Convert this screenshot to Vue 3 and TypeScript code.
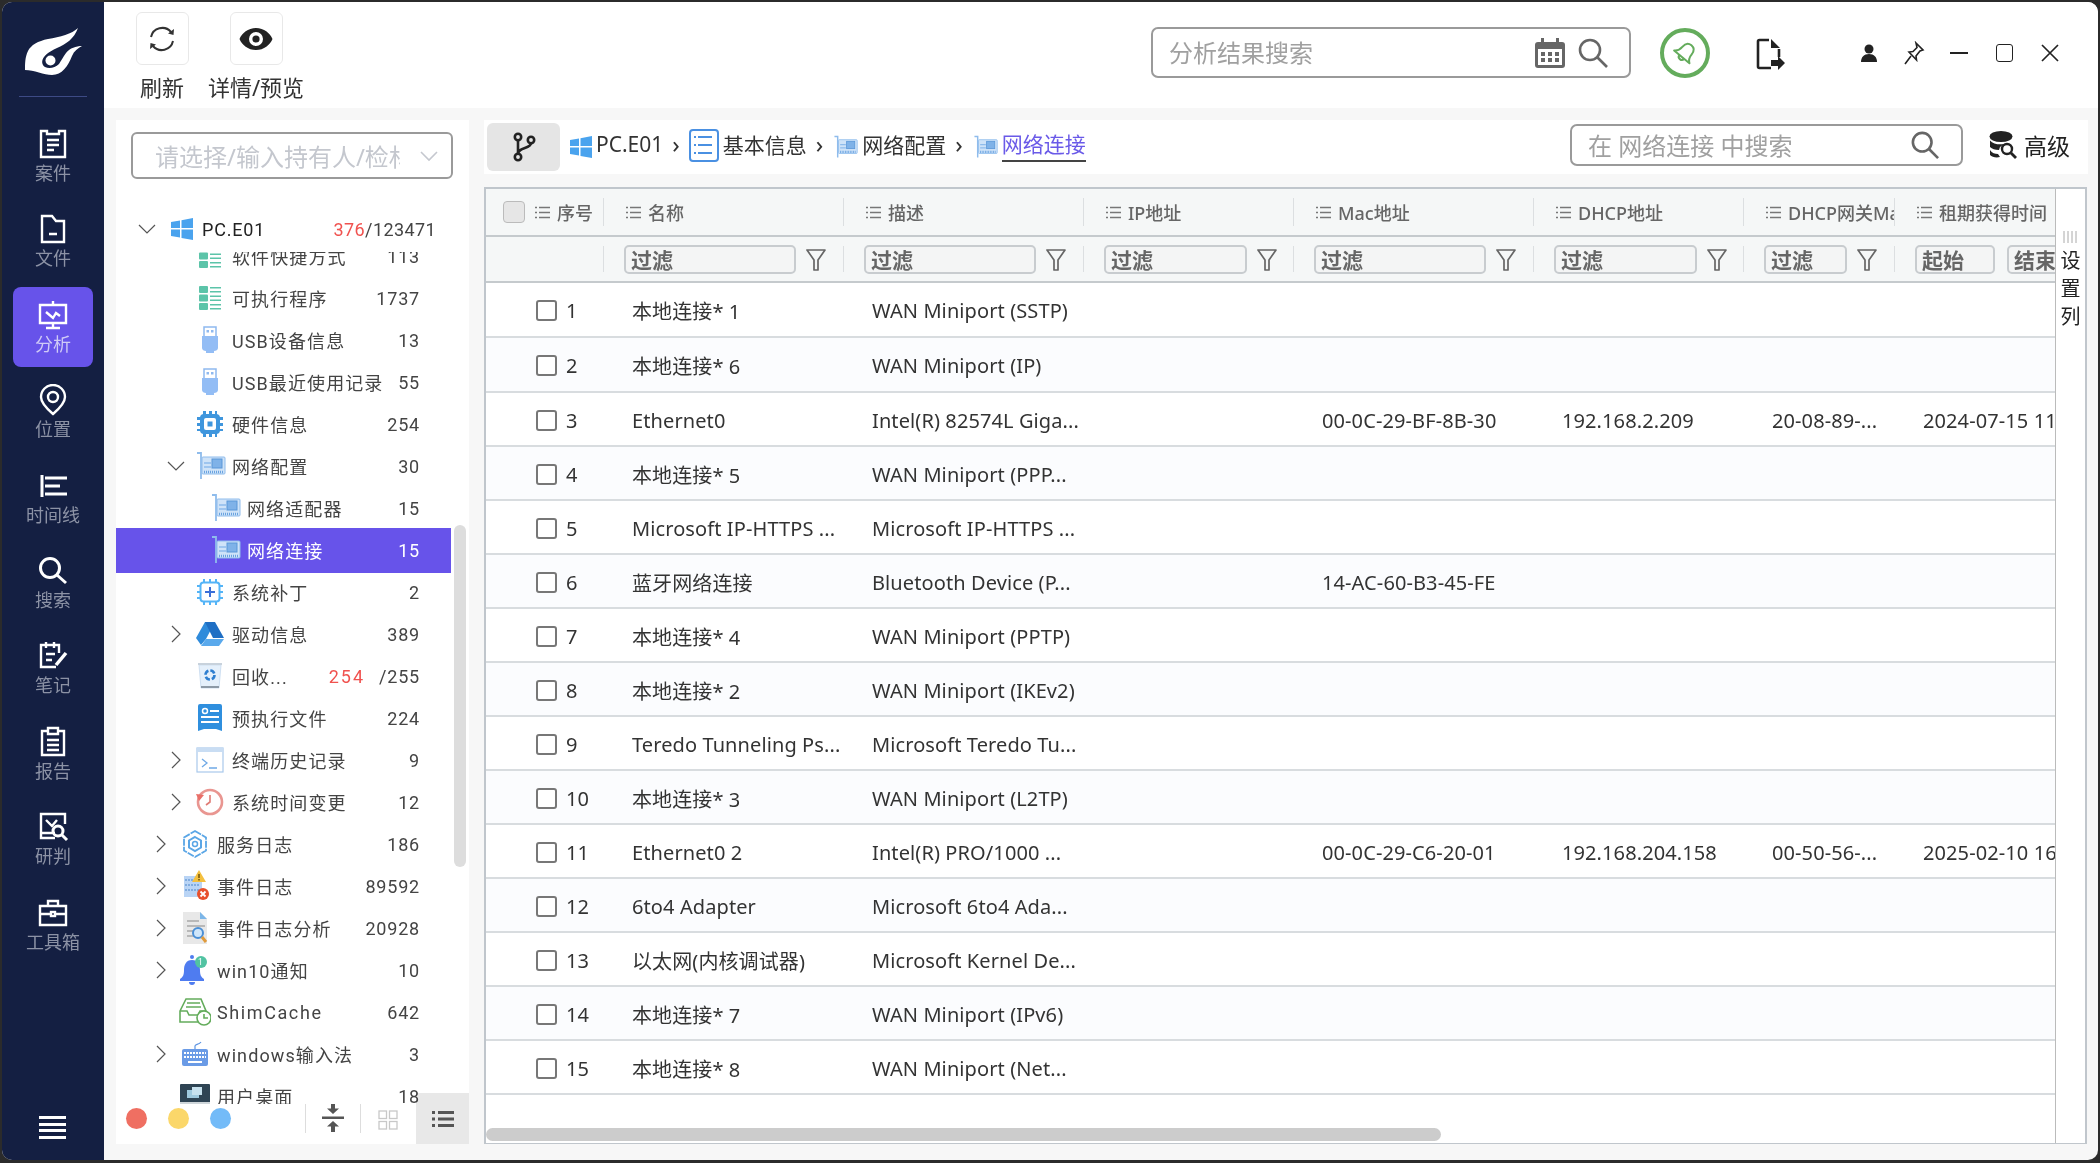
<template>
  <div class="win">
    <aside class="side">
      <div class="logo">
        <svg width="60" height="54" viewBox="0 0 60 54">
          <path fill="#fff" d="M54 0C48 6 36 9 24 11 14 13 7 17 4 23 1 29 1 36 1 42 10 42 20 47 28 47 38 47 44 38 48 28 50 23 54 20 58 18 52 18 46 20 42 25 39 29 37 33 35 36 31 40 25 41 21 39 18 37 17 33 20 29 24 24 29 22 33 20 42 16 50 11 54 0Z" />
          <circle cx="26.500" cy="32.500" r="5" fill="#fff" />
        </svg>
      </div>
      <nav class="nav">
        <div v-for="n in navItems" :key="n.label" class="nav-item" :class="{ on: n.label === '分析' }">
          <svg width="32" height="32" viewBox="0 0 32 32" fill="none" stroke="#fff" stroke-width="2.4" v-html="n.icon" />
          <span>{{ n.label }}</span>
        </div>
      </nav>
      <div class="burger"><i /><i /><i /><i /></div>
    </aside>

    <div class="content">
      <header class="topbar">
        <div class="tool">
          <div class="tool-btn">
            <svg width="30" height="30" viewBox="0 0 30 30" fill="none" stroke="#333" stroke-width="2">
              <path d="M4 13A11.500 11.500 0 0 1 24 8M26 17A11.500 11.500 0 0 1 6 22" />
              <path fill="#333" stroke="none" d="M21 9.500l5.500 1.500 .5-6zM9 20.500L3.500 19 3 25z" />
            </svg>
          </div>
          <span>刷新</span>
        </div>
        <div class="tool tool2">
          <div class="tool-btn">
            <svg width="34" height="24" viewBox="0 0 34 24">
              <path fill="#222" fill-rule="evenodd" d="M17 1C9 1 3 6 .5 12 3 18 9 23 17 23s14-5 16.500-11C31 6 25 1 17 1ZM17 5a7 7 0 1 1 0 14 7 7 0 0 1 0-14Z" />
              <circle cx="17" cy="12" r="3.600" fill="#222" />
            </svg>
          </div>
          <span>详情/预览</span>
        </div>
        <div class="top-right">
          <label class="search top-search">
            <input placeholder="分析结果搜索" />
            <svg width="32" height="30" viewBox="0 0 32 30" class="cal">
              <rect x="1" y="4" width="30" height="26" rx="3" fill="#666" />
              <rect x="4" y="11" width="24" height="16" fill="#fff" />
              <rect x="7" y="0" width="3" height="7" fill="#666" /><rect x="22" y="0" width="3" height="7" fill="#666" />
              <g fill="#666"><rect x="7" y="14" width="4" height="4" /><rect x="14" y="14" width="4" height="4" /><rect x="21" y="14" width="4" height="4" /><rect x="7" y="20" width="4" height="4" /><rect x="14" y="20" width="4" height="4" /><rect x="21" y="20" width="4" height="4" /></g>
            </svg>
            <svg width="30" height="30" viewBox="0 0 30 30" fill="none" stroke="#666" stroke-width="2.600"><circle cx="12" cy="12" r="10" /><path d="M19 19l10 10" /></svg>
          </label>
          <div class="bell-ring">
            <svg width="28" height="28" viewBox="0 0 28 28" fill="none" stroke="#64ac5c" stroke-width="2" stroke-linejoin="round">
              <g transform="rotate(40 14 14)"><path d="M14 4c-4 0-6 3-6 7 0 4-1 6-4 8h20c-3-2-4-4-4-8 0-4-2-7-6-7zM11 19c0 4 6 4 6 0" /></g>
            </svg>
          </div>
          <svg class="export" width="30" height="32" viewBox="0 0 30 32" fill="none" stroke="#222" stroke-width="2.600">
            <path d="M13 2H3.500A1.500 1.500 0 0 0 2 3.500v25A1.500 1.500 0 0 0 3.500 30H15M23 11v8" />
            <path fill="#222" stroke="none" d="M15 1l9 9h-9zM15 22h7v-4l7 7-7 7v-4h-7z" />
          </svg>
          <div class="win-btns">
            <svg width="18" height="18" viewBox="0 0 18 18"><circle cx="9" cy="5" r="4.500" fill="#222" /><path fill="#222" d="M1 18c0-5 3-8 8-8s8 3 8 8z" /></svg>
            <svg width="22" height="24" viewBox="0 0 22 24" fill="none" stroke="#222" stroke-width="1.600"><path d="M13 2l7 7-3 1-4 5 .5 4L6 11l4-.5 4-4zM8 15l-6 8" /></svg>
            <i class="w-min" />
            <i class="w-max" />
            <svg width="18" height="18" viewBox="0 0 18 18" stroke="#222" stroke-width="1.700"><path d="M1 1l16 16M17 1L1 17" /></svg>
          </div>
        </div>
      </header>

      <div class="body">
        <section class="tree">
          <div class="select"><span>请选择/输入持有人/检材</span>
            <svg width="20" height="12" viewBox="0 0 20 12" fill="none" stroke="#c5c8cf" stroke-width="1.600"><path d="M2 2l8 8 8-8" /></svg>
          </div>
          <div class="root">
            <svg class="chev" width="20" height="12" viewBox="0 0 20 12" fill="none" stroke="#555" stroke-width="1.200"><path d="M2 2l8 8 8-8" /></svg>
            <svg class="ico" width="24" height="24" viewBox="0 0 24 24" v-html="icons.win" />
            <span class="root-name">PC.E01</span>
            <span class="root-cnt"><em>376</em>/123471</span>
          </div>
          <div class="tree-clip">
            <div class="tree-scroll">
              <div v-for="t in treeRows" :key="t.name" class="row" :class="[`lv${t.lv}`, { sel: t.name === '网络连接', wide: t.name === 'ShimCache' }]">
                <span class="chev-box">
                  <svg v-if="t.ch === 'r'" width="12" height="20" viewBox="0 0 12 20" fill="none" stroke="#555" stroke-width="1.200"><path d="M2 2l8 8-8 8" /></svg>
                  <svg v-if="t.ch === 'd'" width="20" height="12" viewBox="0 0 20 12" fill="none" stroke="#555" stroke-width="1.200"><path d="M2 2l8 8 8-8" /></svg>
                </span>
                <svg class="ico" width="32" height="32" viewBox="0 0 32 32" v-html="icons[t.icon]" />
                <span class="name">{{ t.name }}</span>
                <span class="cnt"><em v-if="t.red">{{ t.red }}</em>{{ t.cnt }}</span>
              </div>
            </div>
          </div>
          <div class="vbar" />
          <div class="tree-foot">
            <i class="dot" style="background:#ef6f62" /><i class="dot" style="background:#fbd76a" /><i class="dot" style="background:#73bbf8" />
            <i class="foot-sep s1" />
            <svg class="f-col" width="22" height="28" viewBox="0 0 22 28" fill="#555"><rect x="0" y="12.500" width="22" height="2.500" /><path d="M11 10 5 4.500h4V0h4v4.500h4zM11 17l6 5.500h-4V28H9v-5.500H5z" /></svg>
            <i class="foot-sep s2" />
            <svg class="f-grid" width="20" height="20" viewBox="0 0 20 20" fill="none" stroke="#c8c8c8" stroke-width="1.300"><rect x="1" y="1" width="7.500" height="7.500" /><rect x="11.500" y="1" width="7.500" height="7.500" /><rect x="1" y="11.500" width="7.500" height="7.500" /><rect x="11.500" y="11.500" width="7.500" height="7.500" /></svg>
            <div class="f-list">
              <svg width="22" height="16" viewBox="0 0 22 16" fill="#555"><rect y="0" width="3" height="3" /><rect x="6" y="0" width="16" height="3" /><rect y="6.500" width="3" height="3" /><rect x="6" y="6.500" width="16" height="3" /><rect y="13" width="3" height="3" /><rect x="6" y="13" width="16" height="3" /></svg>
            </div>
          </div>
        </section>

        <main class="main">
          <div class="crumbs">
            <div class="branch">
              <svg width="26" height="30" viewBox="0 0 26 30" fill="none" stroke="#222" stroke-width="2.600"><circle cx="7" cy="5" r="3.200" /><circle cx="7" cy="25" r="3.200" /><circle cx="20" cy="8" r="3.200" /><path d="M7 8v14M20 11c0 6-13 4-13 11" /></svg>
            </div>
            <svg class="c-win" width="24" height="24" viewBox="0 0 24 24" v-html="icons.win" />
            <span class="c-txt">PC.E01</span><b class="sep">›</b>
            <svg class="c-list" width="30" height="33" viewBox="0 0 30 33" fill="none" stroke="#4a90e2"><rect x="1" y="1" width="28" height="31" rx="3" stroke-width="2" /><path stroke-width="1.800" d="M9 8h14M9 16h14M9 24h14M5 8h2M5 16h2M5 24h2" /></svg>
            <span class="c-txt">基本信息</span><b class="sep">›</b>
            <svg class="c-nic" width="26" height="28" viewBox="0 0 32 32" v-html="icons.nic" />
            <span class="c-txt">网络配置</span><b class="sep">›</b>
            <svg class="c-nic" width="26" height="28" viewBox="0 0 32 32" v-html="icons.nic" />
            <span class="c-txt cur">网络连接</span>
            <div class="c-right">
              <label class="search sub-search">
                <input placeholder="在 网络连接 中搜索" />
                <svg width="28" height="28" viewBox="0 0 30 30" fill="none" stroke="#666" stroke-width="2.800"><circle cx="12" cy="12" r="10" /><path d="M19 19l10 10" /></svg>
              </label>
              <svg class="adv-ico" width="28" height="28" viewBox="0 0 28 28">
                <ellipse cx="12" cy="5.500" rx="11.500" ry="5.500" fill="#222" />
                <path fill="#222" d="M1 9.500c3 3.500 9 4.500 14 3.500l-4 3-1 3c-4 0-7-1-9-3zM1 19c2 3 5 4 8 4l2 3c-4 1-8 0-10-2z" />
                <circle cx="18" cy="18" r="5" fill="#fff" stroke="#222" stroke-width="2.400" />
                <path stroke="#222" stroke-width="2.800" d="M22 22l5 5" />
              </svg>
              <span class="adv">高级</span>
            </div>
          </div>

          <div class="tbl">
            <div class="tbl-inner">
              <div class="t-grid t-head">
                <div class="h c-seq"><i class="h-check" /><svg class="lst" width="15" height="13" viewBox="0 0 15 13" v-html="lstIcon" /><span>序号</span></div>
                <div v-for="c in columns" :key="c" class="h"><svg class="lst" width="15" height="13" viewBox="0 0 15 13" v-html="lstIcon" /><span>{{ c }}</span></div>
              </div>
              <div class="t-grid t-filter">
                <div class="f" />
                <div v-for="w in filterWidths" :key="w.k" class="f">
                  <input placeholder="过滤" :style="{ width: w.w + 'px' }" />
                  <svg width="20" height="22" viewBox="0 0 20 22" fill="none" stroke="#666" stroke-width="1.700" stroke-linejoin="round"><path d="M1 1h18l-7 10v10H8V11z" /></svg>
                </div>
                <div class="f">
                  <input class="tm" placeholder="起始" />
                  <input class="tm" placeholder="结束" />
                </div>
              </div>
              <div v-for="(r, i) in rows" :key="i" class="t-grid t-row" :class="{ alt: i % 2 === 1, tall: i < 2 }">
                <div class="d c-no"><i class="r-check" /><span>{{ i + 1 }}</span></div>
                <div v-for="(v, k) in r" :key="k" class="d">{{ v }}</div>
              </div>
            </div>
            <div class="cols-tab">
              <svg width="16" height="12" viewBox="0 0 16 12" stroke="#aaa" stroke-width="1"><path d="M1 0v12M5 0v12M9 0v12M13 0v12" /></svg>
              <span>设</span><span>置</span><span>列</span>
            </div>
            <div class="hbar" />
          </div>
        </main>
      </div>
    </div>
  </div>
</template>

<script setup lang="ts">
type TreeRow = { name: string; cnt: string; red?: string; icon: string; lv: number; ch?: 'r' | 'd' }

const navItems = [
  { label: '案件', icon: '<path d="M4 3h6v3h12V3h6v26H4z"/><path d="M10 12h12M10 17h12M10 22h7"/>' },
  { label: '文件', icon: '<path d="M5 3h10l4 5h8v21H5z"/><path d="M12 21h8"/>' },
  { label: '分析', icon: '<path d="M3 6h26v18H3zM16 2v4M16 24v4M9 29h14"/><path d="M9 13l7 6 3-5 4 3"/>' },
  { label: '位置', icon: '<path d="M16 30C9 24 4 18 4 13a12 12 0 0 1 24 0c0 5-5 11-12 17z"/><circle cx="16" cy="13" r="5"/>' },
  { label: '时间线', icon: '<path stroke-width="3" d="M5 5v22M8 8h22M8 16h15M8 24h22"/>' },
  { label: '搜索', icon: '<circle cx="13" cy="13" r="9.500" stroke-width="3"/><path stroke-width="3" d="M20 20l9 8"/>' },
  { label: '笔记', icon: '<path d="M22 13V5H4v22h15M9 2v6M17 2v6M9 14h9M9 20h6"/><path stroke-width="3.500" d="M29 13 19 25"/>' },
  { label: '报告', icon: '<path d="M10 5H5v24h22V5h-5"/><path d="M11 2h10v6H11zM10 14h12M10 19h12M10 24h12"/>' },
  { label: '研判', icon: '<path d="M28 13V3H4v24h14M4 22h14"/><path d="M9 9l6 6 5-6"/><circle cx="21" cy="20" r="5" stroke-width="3"/><path stroke-width="3" d="M25 24l5 5"/>' },
  { label: '工具箱', icon: '<path d="M3 9h26v19H3zM11 9V4h10v5M3 17h26"/><rect x="14" y="15" width="4" height="4" fill="#141f42"/>' }
]

const nicSvg = '<path fill="none" stroke="#8fbcec" stroke-width="1.800" d="M3 3h4v26"/><rect x="8" y="7" width="23" height="17" rx="1" fill="#cfe3f8" stroke="#8fbcec"/><rect x="18" y="9" width="10" height="9" fill="#7fb2e8" stroke="#5b97d8"/><path stroke="#8fbcec" stroke-width="1.500" d="M10 13h7M10 17h7"/><path stroke="#6aa3e0" stroke-width="2.500" stroke-dasharray="1 1" d="M10 22h20"/>'

const icons: Record<string, string> = {
  win: '<path fill="#4aa3ee" d="M1 5l9-1.500V11H1zM11.500 3.200 23 1v10H11.500zM1 12.500h9v8L1 19zM11.500 12.500H23V23l-11.500-2z"/>',
  exe: '<g fill="#5cc4a9"><rect x="5" y="4" width="9" height="7" rx="1"/><rect x="5" y="12.500" width="9" height="7" rx="1"/><rect x="5" y="21" width="9" height="7" rx="1"/><path d="M16 5h11v1.500H16zM16 9h11v1.500H16zM16 13.500h11V15H16zM16 17.500h11V19H16zM16 22h11v1.500H16zM16 26h11v1.500H16z"/></g>',
  usb: '<path fill="#fff" stroke="#8fb9ef" stroke-width="1.500" d="M10 3h12v11H10z"/><rect x="12.500" y="6" width="2.500" height="2.500" fill="#8fb9ef"/><rect x="17" y="6" width="2.500" height="2.500" fill="#8fb9ef"/><path fill="#93bdf5" d="M8 12h16v12c0 2-2 3-4 3v2h-8v-2c-2 0-4-1-4-3z"/>',
  chip: '<g fill="#3f96dd"><rect x="6" y="6" width="20" height="20" rx="4"/><path d="M9 3h3v4H9zM15 3h3v4h-3zM21 3h2v4h-2zM9 25h3v4H9zM15 25h3v4h-3zM21 25h2v4h-2zM3 9h4v3H3zM3 15h4v3H3zM3 21h4v2H3zM25 9h4v3h-4zM25 15h4v3h-4zM25 21h4v2h-4z"/></g><rect x="10" y="10" width="12" height="12" rx="2" fill="#fff"/><rect x="13.500" y="13.500" width="5" height="5" fill="#3f96dd"/>',
  nic: nicSvg,
  patch: '<rect x="6.500" y="6.500" width="19" height="19" rx="3" fill="#fff" stroke="#54b4f7" stroke-width="2"/><path stroke="#54b4f7" stroke-width="2" d="M10 3v3M16 3v3M22 3v3M10 26v3M16 26v3M22 26v3M3 10h3M3 16h3M3 22h3M26 10h3M26 16h3M26 22h3"/><path stroke="#3b6fd8" stroke-width="2" d="M16 11v10M11 16h10"/>',
  drive: '<path fill="#2f8bdb" d="M11 4h10l-9 17-5 6-5-7z"/><path fill="#1f6fc4" d="M21 4 30 20H19L11 4z"/><path fill="#5aa9ec" d="M12 21h18l-5 7H7z"/>',
  recycle: '<path fill="#e5f0fb" stroke="#cfe0f2" d="M5 5h22l-2 23H7z"/><rect x="4" y="3" width="24" height="2" fill="#c8d2dc"/><rect x="7" y="26" width="18" height="2" fill="#8d9aa7"/><circle cx="16" cy="15" r="4.500" fill="none" stroke="#2f7fd0" stroke-width="2.600" stroke-dasharray="5 2"/>',
  pre: '<path fill="#2f8fde" d="M4 4a2 2 0 0 1 2-2h20a2 2 0 0 1 2 2v25l-6-2H10l-6 2z"/><circle cx="11" cy="9" r="2.500" fill="none" stroke="#fff" stroke-width="1.500"/><path stroke="#fff" stroke-width="1.800" d="M16 9h9M7 15h18M7 20h18"/>',
  term: '<rect x="3" y="4" width="26" height="24" fill="#fff" stroke="#a9c9ec" stroke-width="1.200"/><rect x="3" y="4" width="26" height="4" fill="#c9ddf3"/><path fill="none" stroke="#6fa9e6" stroke-width="1.300" d="M8 15l5 4-5 4M15 24h8"/>',
  clock: '<circle cx="16" cy="16" r="12" fill="#fff" stroke="#e99691" stroke-width="2.600"/><path fill="none" stroke="#e07a74" stroke-width="1.600" d="M16 9v7l-4 3"/><path fill="#e96f68" d="M2 8l8 1-5 6z"/>',
  svc: '<path fill="none" stroke="#5aa6e6" stroke-width="1.800" stroke-dasharray="7 1" d="M16 3l11 6.500v13L16 29 5 22.500v-13z"/><path fill="none" stroke="#5aa6e6" stroke-width="2" d="M16 9l6 3.500v7L16 23l-6-3.500v-7z"/><circle cx="16" cy="16" r="2.500" fill="none" stroke="#5aa6e6" stroke-width="1.500"/>',
  evt: '<rect x="5" y="6" width="18" height="21" fill="#b9d4f5"/><path stroke="#6f9ed8" stroke-width="1.300" stroke-dasharray="2 1" d="M6 10h14M6 15h14M6 20h14"/><path fill="#f4c03f" d="M20 0l7 12H13z"/><path stroke="#7a5a10" stroke-width="1.600" d="M20 4v4M20 9v1.500"/><circle cx="24" cy="24" r="6" fill="#e8502c"/><path stroke="#fff" stroke-width="1.800" d="M21.500 21.500l5 5M26.500 21.500l-5 5"/>',
  ana: '<path fill="#e8e8e8" d="M4 0h17l7 7v25H4z"/><path fill="#7cb6e8" d="M21 0l7 7h-7z"/><path stroke="#b8b8b8" stroke-width="1.800" d="M8 9h12M8 14h18M8 19h6M8 24h8"/><circle cx="19" cy="21" r="5" fill="#cfe6fa" stroke="#4a8fd6" stroke-width="2"/><path stroke="#e09a3a" stroke-width="3" d="M23 25l4 5"/>',
  bell: '<circle cx="13" cy="3" r="2" fill="#4f7cf0"/><path fill="#4f7cf0" d="M13 6c6 0 8 5 8 10s1 7 4 9v2H1v-2c3-2 4-4 4-9s2-10 8-10z"/><path fill="#4f7cf0" d="M10 28h6a3 3 0 0 1-6 0z"/><circle cx="22" cy="8" r="6" fill="#51c3a2"/><text x="22" y="11" font-size="8.500" fill="#fff" text-anchor="middle" font-family="Roboto">1</text>',
  shim: '<g fill="none" stroke="#64ac5c" stroke-width="1.600"><path d="M1 15 7 3h15l5 12v11H1zM1 15h7l2 4h9l2-4h6M8 7h13M7 11h15"/><circle cx="25" cy="22" r="7" fill="#fff"/><path d="M25 18v4h4"/></g>',
  kbd: '<path fill="none" stroke="#5c94e2" stroke-width="1.200" d="M16 11v-3c0-2 4-1 6-4"/><rect x="3" y="11" width="26" height="17" rx="2" fill="#6a9be6"/><path stroke="#fff" stroke-width="2" stroke-dasharray="2 1" d="M5 15h22M5 19h22"/><path stroke="#fff" stroke-width="2" d="M9 24h14"/>',
  desk: '<rect x="1" y="4" width="30" height="19" rx="1" fill="#2f4454"/><rect x="1" y="22" width="30" height="3" fill="#cfd6da"/><path fill="#9fc9de" d="M8 10h12v8H8z"/><path fill="#c7e1ee" d="M13 7h10v8H13z"/><path fill="#2f4454" d="M14 25h4v2h-4z"/>'
}

const treeRows: TreeRow[] = [
  { name: '软件快捷方式', cnt: '113', icon: 'exe', lv: 2 },
  { name: '可执行程序', cnt: '1737', icon: 'exe', lv: 2 },
  { name: 'USB设备信息', cnt: '13', icon: 'usb', lv: 2 },
  { name: 'USB最近使用记录', cnt: '55', icon: 'usb', lv: 2 },
  { name: '硬件信息', cnt: '254', icon: 'chip', lv: 2 },
  { name: '网络配置', cnt: '30', icon: 'nic', lv: 2, ch: 'd' },
  { name: '网络适配器', cnt: '15', icon: 'nic', lv: 3 },
  { name: '网络连接', cnt: '15', icon: 'nic', lv: 3 },
  { name: '系统补丁', cnt: '2', icon: 'patch', lv: 2 },
  { name: '驱动信息', cnt: '389', icon: 'drive', lv: 2, ch: 'r' },
  { name: '回收...', cnt: '/255', red: '254', icon: 'recycle', lv: 2 },
  { name: '预执行文件', cnt: '224', icon: 'pre', lv: 2 },
  { name: '终端历史记录', cnt: '9', icon: 'term', lv: 2, ch: 'r' },
  { name: '系统时间变更', cnt: '12', icon: 'clock', lv: 2, ch: 'r' },
  { name: '服务日志', cnt: '186', icon: 'svc', lv: 1, ch: 'r' },
  { name: '事件日志', cnt: '89592', icon: 'evt', lv: 1, ch: 'r' },
  { name: '事件日志分析', cnt: '20928', icon: 'ana', lv: 1, ch: 'r' },
  { name: 'win10通知', cnt: '10', icon: 'bell', lv: 1, ch: 'r' },
  { name: 'ShimCache', cnt: '642', icon: 'shim', lv: 1 },
  { name: 'windows输入法', cnt: '3', icon: 'kbd', lv: 1, ch: 'r' },
  { name: '用户桌面', cnt: '18', icon: 'desk', lv: 1 }
]

const lstIcon = '<path stroke="#777" stroke-width="1.600" d="M0 1.500h2M4 1.500h11M0 6.500h2M4 6.500h11M0 11.500h2M4 11.500h11"/>'
const columns = ['名称', '描述', 'IP地址', 'Mac地址', 'DHCP地址', 'DHCP网关Mac', '租期获得时间']
const filterWidths = [
  { k: 'name', w: 172 },
  { k: 'desc', w: 172 },
  { k: 'ip', w: 143 },
  { k: 'mac', w: 172 },
  { k: 'dhcp', w: 143 },
  { k: 'gw', w: 83 }
]

const rows = [
  ['本地连接* 1', 'WAN Miniport (SSTP)', '', '', '', '', ''],
  ['本地连接* 6', 'WAN Miniport (IP)', '', '', '', '', ''],
  ['Ethernet0', 'Intel(R) 82574L Giga...', '', '00-0C-29-BF-8B-30', '192.168.2.209', '20-08-89-...', '2024-07-15 11:'],
  ['本地连接* 5', 'WAN Miniport (PPP...', '', '', '', '', ''],
  ['Microsoft IP-HTTPS ...', 'Microsoft IP-HTTPS ...', '', '', '', '', ''],
  ['蓝牙网络连接', 'Bluetooth Device (P...', '', '14-AC-60-B3-45-FE', '', '', ''],
  ['本地连接* 4', 'WAN Miniport (PPTP)', '', '', '', '', ''],
  ['本地连接* 2', 'WAN Miniport (IKEv2)', '', '', '', '', ''],
  ['Teredo Tunneling Ps...', 'Microsoft Teredo Tu...', '', '', '', '', ''],
  ['本地连接* 3', 'WAN Miniport (L2TP)', '', '', '', '', ''],
  ['Ethernet0 2', 'Intel(R) PRO/1000 ...', '', '00-0C-29-C6-20-01', '192.168.204.158', '00-50-56-...', '2025-02-10 16:'],
  ['6to4 Adapter', 'Microsoft 6to4 Ada...', '', '', '', '', ''],
  ['以太网(内核调试器)', 'Microsoft Kernel De...', '', '', '', '', ''],
  ['本地连接* 7', 'WAN Miniport (IPv6)', '', '', '', '', ''],
  ['本地连接* 8', 'WAN Miniport (Net...', '', '', '', '', '']
]
</script>

<style>
html, body { margin: 0; background: #2b2b2b; }
</style>

<style scoped>
.win {
  margin: 2px;
  width: 2096px;
  height: 1158px;
  display: flex;
  border-radius: 10px;
  overflow: hidden;
  font-family: "Noto Sans", "Noto Sans CJK SC", sans-serif;
  color: #333;
  background: #f7f7f7;
}
em { font-style: normal; color: #f0524f; }

/* left nav */
.side {
  width: 102px;
  flex: none;
  background: #141f42;
  display: flex;
  flex-direction: column;
  align-items: center;
  position: relative;
}
.logo {
  width: 68px;
  height: 95px;
  box-sizing: border-box;
  padding: 26px 0 0 5px;
  border-bottom: 1px solid #3d4a85;
}
.nav { display: flex; flex-direction: column; gap: 5.400px; margin-top: 19px; width: 80px; }
.nav-item {
  height: 80px;
  display: flex;
  flex-direction: column;
  align-items: center;
  justify-content: center;
  border-radius: 8px;
  font-size: 18px;
  line-height: 22px;
  color: #8c92a5;
  gap: 2px;
}
.nav-item.on { background: #6753ea; color: #cfcaf6; }
.burger { position: absolute; left: 37px; top: 1114px; width: 27px; }
.burger i { display: block; height: 3px; background: #fff; margin-bottom: 3.600px; }

/* top bar */
.content { flex: 1; min-width: 0; display: flex; flex-direction: column; }
.topbar {
  height: 106px;
  flex: none;
  background: #fff;
  display: flex;
  padding-left: 31px;
}
.tool { width: 54px; display: flex; flex-direction: column; align-items: center; padding-top: 10px; }
.tool2 { margin-left: 40px; }
.tool-btn {
  width: 53px;
  height: 53px;
  box-sizing: border-box;
  border: 1px solid #e8e8e8;
  border-radius: 6px;
  display: flex;
  align-items: center;
  justify-content: center;
}
.tool span { font-size: 22px; line-height: 30px; margin-top: 7px; white-space: nowrap; color: #333; }
.top-right { margin-left: auto; display: flex; align-items: flex-start; padding-top: 25px; }
.search {
  display: flex;
  align-items: center;
  box-sizing: border-box;
  border: 2px solid #9a9a9a;
  border-radius: 7px;
  background: #fff;
}
.search input {
  flex: 1;
  min-width: 0;
  border: 0;
  outline: 0;
  background: none;
  font: inherit;
  padding: 0;
}
.search input::placeholder { color: #a0a0a0; }
.top-search { width: 480px; height: 51px; padding: 0 21px 0 16px; font-size: 24px; }
.cal { margin-right: 12px; }
.bell-ring {
  width: 50px;
  height: 50px;
  box-sizing: border-box;
  border: 4px solid #64ac5c;
  border-radius: 50%;
  margin: 1px 0 0 29px;
  display: flex;
  align-items: center;
  justify-content: center;
}
.export { margin: 11px 0 0 46px; }
.win-btns { display: flex; align-items: center; margin: 13px 0 0 0; height: 26px; width: 312px; }
.win-btns > :nth-child(1) { margin-left: 74px; }
.win-btns > :nth-child(2) { margin-left: 25px; }
.w-min { width: 18px; height: 2px; background: #222; margin-left: 25px; }
.w-max { width: 17px; height: 18px; border: 1.600px solid #222; border-radius: 3px; margin-left: 28px; box-sizing: border-box; }
.win-btns > :nth-child(5) { margin-left: 28px; }

/* body */
.body { flex: 1; min-height: 0; display: flex; padding: 12px 10px 16px 12px; }

/* tree */
.tree {
  width: 353px;
  flex: none;
  background: #fff;
  position: relative;
  font-family: Roboto, "Noto Sans CJK SC", sans-serif;
  letter-spacing: 1.100px;
  font-size: 18px;
  color: #444;
  display: flex;
  flex-direction: column;
}
.select {
  margin: 12px 16px 0 15px;
  height: 47px;
  box-sizing: border-box;
  border: 2px solid #9a9a9a;
  border-radius: 6px;
  display: flex;
  align-items: center;
  padding: 0 12px 0 22px;
  font-family: "Noto Sans", "Noto Sans CJK SC", sans-serif;
  font-size: 24px;
  letter-spacing: 0;
  color: #c4c7ce;
}
.select span { width: 245px; overflow: hidden; white-space: nowrap; flex: none; }
.select svg { margin-left: auto; }
.root { height: 42px; margin-top: 29px; display: flex; align-items: center; padding-left: 21px; flex: none; }
.root .chev { flex: none; }
.root .ico { margin-left: 13px; flex: none; }
.root-name { margin-left: 8px; color: #222; font-size: 18px; letter-spacing: .8px; }
.root-cnt { margin-left: auto; margin-right: 33px; letter-spacing: .4px; }
.tree-clip { flex: 1; min-height: 0; overflow: hidden; margin-top: 2px; }
.tree-scroll { margin-top: -17px; }
.row { height: 42px; display: flex; align-items: center; padding-right: 49px; white-space: nowrap; position: relative; }
.lv1 { padding-left: 33px; }
.lv2 { padding-left: 48px; }
.lv3 { padding-left: 63px; }
.chev-box { width: 24px; display: flex; justify-content: center; flex: none; }
.ico { flex: none; }
.row > .ico { margin: 0 6px 0 6px; }
.row .cnt { margin-left: auto; letter-spacing: .8px; }
.row .cnt em { margin-right: 14px; letter-spacing: 2px; }
.row.wide .name { letter-spacing: 1.600px; }
.row.sel { background: #6753ea; color: #fff; box-shadow: 0 -1px 0 #6753ea, 0 2px 0 #6753ea; margin-right: 18px; padding-right: 31px; }
.vbar { position: absolute; left: 338px; top: 405px; width: 12px; height: 342px; background: #ddd; border-radius: 6px; }
.tree-foot { position: absolute; left: 0; right: 0; bottom: 0; height: 40px; background: #fff; }
.dot { position: absolute; top: 3.500px; width: 21px; height: 21px; border-radius: 50%; }
.dot:nth-child(1) { left: 10px; }
.dot:nth-child(2) { left: 52px; }
.dot:nth-child(3) { left: 94px; }
.foot-sep { position: absolute; top: 0; width: 1px; height: 29px; background: #ddd; }
.s1 { left: 189px; }
.s2 { left: 244px; }
.f-col { position: absolute; left: 206px; top: 0; }
.f-grid { position: absolute; left: 262px; top: 6px; }
.f-list {
  position: absolute;
  right: 0;
  bottom: 0;
  width: 53px;
  height: 51px;
  background: #e8e8e8;
  mix-blend-mode: multiply;
  display: flex;
  align-items: center;
  justify-content: center;
}

/* main */
.main { flex: 1; min-width: 0; margin-left: 15px; display: flex; flex-direction: column; }
.crumbs {
  height: 54px;
  flex: none;
  background: #fff;
  display: flex;
  align-items: center;
  font-size: 21px;
  padding-left: 3px;
}
.branch {
  width: 73px;
  height: 48px;
  background: #e5e5e5;
  border-radius: 6px;
  display: flex;
  align-items: center;
  justify-content: center;
  margin-right: 9px;
}
.c-win { margin-right: 3px; }
.c-txt { color: #333; margin-bottom: 6px; }
.sep { font-weight: 400; margin: 0 9px 0 9px; font-size: 24px; line-height: 24px; color: #333; position: relative; top: -3px; }
.c-list { margin-right: 4px; margin-bottom: 3px; }
.c-nic { margin: 0 4px 0 0; }
.cur { color: #6a5ae8; border-bottom: 2px solid #444; line-height: 26px; padding-bottom: 3px; margin-bottom: 1px; }
.c-right { margin-left: auto; margin-bottom: 4px; display: flex; align-items: center; }
.sub-search { width: 393px; height: 42px; padding: 0 22px 0 16px; font-size: 24px; }
.adv-ico { margin-left: 26px; }
.adv { font-size: 23px; margin: 0 18px 0 7px; color: #222; }

/* table */
.tbl {
  margin-top: 13px;
  margin-right: 1px;
  height: 959px;
  box-sizing: border-box;
  border: 2px solid #c0c6cc;
  border-bottom-width: 1px;
  background: #fff;
  position: relative;
  display: flex;
  overflow: hidden;
}
.tbl-inner { flex: 1; min-width: 0; overflow: hidden; }
.t-grid {
  display: grid;
  grid-template-columns: 118px 240px 240px 210px 240px 210px 151px 320px;
}
.t-head, .t-filter { background: #f5f7f7; box-sizing: border-box; border-bottom: 2px solid #c5cacd; }
.t-head { height: 48px; width: 1729px; }
.t-filter { height: 46px; width: 1729px; }
.h {
  display: flex;
  align-items: center;
  padding-left: 22px;
  font-size: 18px;
  font-weight: 500;
  color: #666;
  position: relative;
  white-space: nowrap;
  overflow: hidden;
}
.h::after, .f::after {
  content: "";
  position: absolute;
  right: 0;
  top: 9px;
  bottom: 9px;
  width: 1px;
  background: #dcdfe1;
}
.h:last-child::after, .f:last-child::after { display: none; }
.lst { flex: none; margin-right: 7px; }
.c-seq { padding-left: 17px; }
.h-check {
  width: 22px;
  height: 22px;
  flex: none;
  box-sizing: border-box;
  border: 1.500px solid #bbb;
  border-radius: 4px;
  background: #e6e6e6;
  margin-right: 10px;
}
.f { display: flex; align-items: center; padding: 1px 0 0 20px; position: relative; }
.f input {
  box-sizing: border-box;
  height: 29px;
  border: 2px solid #c8cccf;
  border-radius: 5px;
  background: #f4f5f5;
  outline: 0;
  padding: 0 5px;
  font: 700 21px "Noto Sans", "Noto Sans CJK SC", sans-serif;
  flex: none;
}
.f input::placeholder { color: #666; }
.f svg { margin-left: 10px; flex: none; }
.f input.tm { width: 80px; margin-right: 12px; }
.t-row {
  height: 54px;
  box-sizing: border-box;
  border-bottom: 2px solid #d8dcdf;
  width: 1729px;
  background: #fff;
  font-size: 20px;
  letter-spacing: .1px;
  color: #333;
}
.t-row.alt { background: #fbfcfe; }
.t-row.tall { height: 55px; }
.d { display: flex; align-items: center; padding: 2px 0 0 28px; white-space: nowrap; overflow: hidden; }
.c-no { padding-left: 50px; }
.r-check {
  width: 21px;
  height: 21px;
  flex: none;
  box-sizing: border-box;
  border: 2px solid #777;
  border-radius: 3px;
  background: #fff;
  margin-right: 9px;
}
.cols-tab {
  width: 30px;
  flex: none;
  box-sizing: border-box;
  border-left: 1px solid #bbb;
  background: #fff;
  display: flex;
  flex-direction: column;
  align-items: center;
  padding-top: 42px;
  font-size: 20px;
  line-height: 28px;
  color: #222;
}
.cols-tab svg { margin-bottom: 4px; }
.hbar {
  position: absolute;
  left: 0;
  bottom: 2px;
  width: 955px;
  height: 13px;
  background: #ccc;
  border-radius: 7px;
}
</style>
